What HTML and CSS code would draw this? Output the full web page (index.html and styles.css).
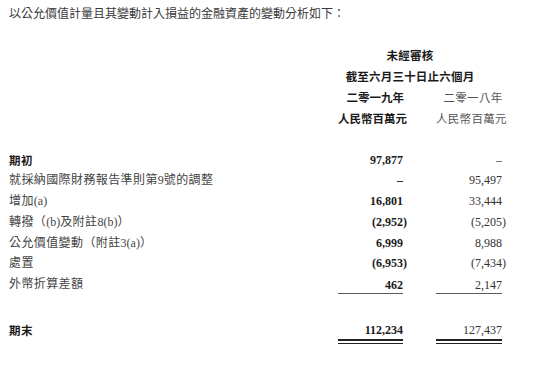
FILE: index.html
```html
<!DOCTYPE html>
<html lang="zh-Hant">
<head>
<meta charset="utf-8">
<title>金融資產變動分析</title>
<link rel="stylesheet" href="styles.css">
</head>
<body>
<p class="intro">以公允價值計量且其變動計入損益的金融資產的變動分析如下：</p>
<div class="table">
  <div class="head-title">未經審核</div>
  <div class="head-title">截至六月三十日止六個月</div>
  <div class="blank"></div>
  <div class="hcur">二零一九年</div>
  <div class="hprev">二零一八年</div>
  <div class="blank"></div>
  <div class="hcur">人民幣百萬元</div>
  <div class="hprev">人民幣百萬元</div>

  <div class="spacer"></div>

  <div class="label strong">期初</div>
  <div class="num cur">97,877</div>
  <div class="num prev">–</div>

  <div class="label">就採納國際財務報告準則第<span class="lat">9</span>號的調整</div>
  <div class="num cur">–</div>
  <div class="num prev">95,497</div>

  <div class="label">增加<span class="lat">(a)</span></div>
  <div class="num cur">16,801</div>
  <div class="num prev">33,444</div>

  <div class="label">轉撥（<span class="lat">(b)</span>及附註<span class="lat">8(b)</span>）</div>
  <div class="num cur">(2,952<span class="cp">)</span></div>
  <div class="num prev">(5,205<span class="cp">)</span></div>

  <div class="label">公允價值變動（附註<span class="lat">3(a)</span>）</div>
  <div class="num cur">6,999</div>
  <div class="num prev">8,988</div>

  <div class="label">處置</div>
  <div class="num cur">(6,953<span class="cp">)</span></div>
  <div class="num prev">(7,434<span class="cp">)</span></div>

  <div class="label">外幣折算差額</div>
  <div class="num cur sub">462</div>
  <div class="num prev sub">2,147</div>

  <div class="label strong total-label">期末</div>
  <div class="num cur total">112,234</div>
  <div class="num prev total">127,437</div>
</div>
</body>
</html>
```

FILE: styles.css
```css
html, body {
  margin: 0;
  padding: 0;
  background: #ffffff;
}

body {
  width: 550px;
  height: 365px;
  overflow: hidden;
  font-family: "Liberation Serif", "Noto Sans CJK TC", serif;
  color: #3a3a3a;
}

.intro {
  margin: 0;
  padding: 4px 0 0 9px;
  font-size: 12px;
  line-height: 20px;
  letter-spacing: 0;
}

.table {
  display: grid;
  grid-template-columns: 1fr 65px 66px;
  column-gap: 33px;
  padding: 0 48px 0 9px;
  margin-top: 20.5px;
}

.head-title {
  grid-column: 2 / 4;
  padding-right: 20px;
  text-align: center;
  font-family: "Noto Sans CJK TC", sans-serif;
  font-weight: 700;
  font-size: 11.5px;
  line-height: 21px;
  letter-spacing: 0.2px;
  color: #1a1a1a;
}

.blank {
  grid-column: 1;
}

.hcur,
.hprev {
  text-align: right;
  font-size: 11.5px;
  line-height: 21px;
  white-space: nowrap;
  font-family: "Noto Sans CJK TC", sans-serif;
}

.hcur {
  font-weight: 700;
  color: #1a1a1a;
  margin-right: -1px;
}

.hprev {
  font-weight: 400;
  color: #555555;
  letter-spacing: 0.3px;
  margin-right: -0.5px;
}

.spacer {
  grid-column: 1 / 4;
  height: 21px;
}

.label {
  grid-column: 1;
  font-size: 12px;
  line-height: 20.8px;
  letter-spacing: 0.4px;
  white-space: nowrap;
  color: #444444;
}

.label .lat {
  letter-spacing: 0;
}

.label.strong {
  font-weight: 700;
  color: #1a1a1a;
  font-family: "Noto Sans CJK TC", sans-serif;
  font-size: 11.5px;
}

.num {
  text-align: right;
  font-size: 12px;
  line-height: 20.8px;
  white-space: nowrap;
}

.num.cur {
  font-weight: 700;
  color: #1a1a1a;
}

.num.prev {
  font-weight: 400;
  color: #333333;
}

.cp {
  margin-right: -4px;
}

.num.sub {
  align-self: start;
  line-height: 16px;
  padding-top: 2.4px;
  border-bottom: 1px solid #5a5a5a;
}

.total-label {
  margin-top: 24.9px;
}

.num.total {
  align-self: start;
  margin-top: 24.9px;
  line-height: 16px;
  padding-top: 2.4px;
  padding-bottom: 4.6px;
  border-bottom: 1px solid #222222;
  background: linear-gradient(#222222, #222222) left 0 bottom 2px / 100% 2px no-repeat;
}
```
